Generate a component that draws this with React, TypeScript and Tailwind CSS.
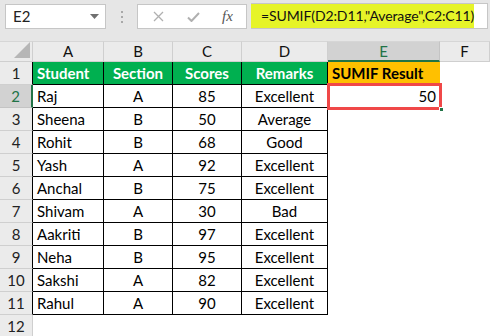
import React from "react";

const data: [string, string, string, string][] = [
  ["Raj", "A", "85", "Excellent"],
  ["Sheena", "B", "50", "Average"],
  ["Rohit", "B", "68", "Good"],
  ["Yash", "A", "92", "Excellent"],
  ["Anchal", "B", "75", "Excellent"],
  ["Shivam", "A", "30", "Bad"],
  ["Aakriti", "B", "97", "Excellent"],
  ["Neha", "B", "95", "Excellent"],
  ["Sakshi", "A", "82", "Excellent"],
  ["Rahul", "A", "90", "Excellent"],
];

const letters = ["A", "B", "C", "D", "E", "F"];

export default function App() {
  const rows: React.ReactNode[] = [];
  for (let r = 1; r <= 12; r++) {
    const sel = r === 2;
    const inTable = r <= 11;
    rows.push(
      <div
        key={`h${r}`}
        className={
          sel
            ? "h-[23px] flex items-center justify-center bg-[#d2d2d2] text-[#217346] border-b border-b-[#c4c4c4] border-r-2 border-r-[#217346]"
            : inTable
            ? "h-[23px] flex items-center justify-center bg-[#ebebeb] text-[#222] border-b border-b-[#cfcfcf] border-r border-r-black"
            : "h-[23px] flex items-center justify-center bg-[#ebebeb] text-[#222] border-b border-b-[#cfcfcf] border-r border-r-[#cfcfcf]"
        }
      >
        {r}
      </div>
    );
    if (r === 1) {
      ["Student", "Section", "Scores", "Remarks"].forEach((t, i) =>
        rows.push(
          <div
            key={`c1${i}`}
            className={
              i === 0
                ? "h-[23px] flex items-center pl-[4px] bg-[#00b050] text-white font-bold border-r border-b border-black"
                : "h-[23px] flex items-center justify-center bg-[#00b050] text-white font-bold border-r border-b border-black"
            }
          >
            {t}
          </div>
        )
      );
      rows.push(
        <div key="e1" className="h-[23px] flex items-center pl-[4px] bg-[#ffc000] text-black font-bold whitespace-nowrap">
          SUMIF Result
        </div>
      );
      rows.push(<div key="f1" className="h-[23px] bg-white" />);
    } else if (inTable) {
      const d = data[r - 2];
      rows.push(
        <div key={`a${r}`} className="h-[23px] flex items-center pl-[4px] bg-white text-black border-r border-b border-black">
          {d[0]}
        </div>
      );
      for (let i = 1; i < 4; i++) {
        rows.push(
          <div key={`c${r}${i}`} className="h-[23px] flex items-center justify-center bg-white text-black border-r border-b border-black">
            {d[i]}
          </div>
        );
      }
      rows.push(
        <div key={`e${r}`} className="h-[23px] flex items-center justify-end pr-[4px] bg-white text-black">
          {r === 2 ? "50" : ""}
        </div>
      );
      rows.push(<div key={`f${r}`} className="h-[23px] bg-white" />);
    } else {
      for (let i = 0; i < 6; i++) rows.push(<div key={`x${r}${i}`} className="h-[23px] bg-white" />);
    }
  }

  return (
    <div className="relative w-[490px] h-[336px] overflow-hidden bg-[#e6e6e6] font-['Lato','Liberation_Sans',sans-serif] text-[15px] leading-none">
      {/* formula bar */}
      <div className="h-[41px] flex items-start pt-[4px] pl-[5px]">
        <div className="w-[101px] h-[25px] bg-white border border-[#c6c6c6] flex items-center justify-between pl-[7px] pr-[6px] text-[#222]">
          <span>E2</span>
          <svg width="9" height="5" viewBox="0 0 9 5">
            <path d="M0 0 L9 0 L4.5 5 Z" fill="#707070" />
          </svg>
        </div>
        <div className="w-[31px] h-[25px] flex flex-col items-center justify-center gap-[3px]">
          <div className="w-[2px] h-[2px] bg-[#a8a8a8]" />
          <div className="w-[2px] h-[2px] bg-[#a8a8a8]" />
          <div className="w-[2px] h-[2px] bg-[#a8a8a8]" />
        </div>
        <div className="w-[110px] h-[25px] bg-white border border-[#c6c6c6] flex items-center">
          <svg className="ml-[15px]" width="11" height="11" viewBox="0 0 11 11">
            <path d="M1 1 L10 10 M10 1 L1 10" stroke="#b0b0b0" strokeWidth="1.3" fill="none" />
          </svg>
          <svg className="ml-[23px]" width="13" height="10" viewBox="0 0 13 10">
            <path d="M1 5.5 L4.5 9 L12 1" stroke="#b0b0b0" strokeWidth="2" fill="none" />
          </svg>
          <span className="ml-[22px] font-['Liberation_Serif',serif] italic text-[15px] text-[#555]">
            fx
          </span>
        </div>
        <div className="w-[4px]" />
        <div className="w-[237px] h-[26px] -mt-[1px] bg-white border border-[#c6c6c6] border-l-0 flex">
          <div className="w-[223px] h-full bg-[#e6f428] flex items-center pl-[10px] text-[#111] text-[14px] tracking-[-0.1px] whitespace-nowrap">
            =SUMIF(D2:D11,"Average",C2:C11)
          </div>
        </div>
      </div>

      {/* sheet */}
      <div className="grid grid-cols-[33px_71px_69px_69px_86px_112px_50px]">
        <div className="h-[21px] bg-[#ebebeb] border-r border-b border-[#cfcfcf] border-t border-t-[#d6d6d6] flex items-end justify-end pr-[2px] pb-[3px]">
          <svg width="16" height="16" viewBox="0 0 16 16">
            <path d="M16 0 L16 16 L0 16 Z" fill="#b6b6b6" />
          </svg>
        </div>
        {letters.map((l) =>
          l === "E" ? (
            <div
              key={l}
              className="h-[21px] flex items-center justify-center bg-[#d2d2d2] text-[#217346] border-r border-r-[#c4c4c4] border-t border-t-[#d6d6d6] border-b-2 border-b-[#217346]"
            >
              {l}
            </div>
          ) : (
            <div
              key={l}
              className="h-[21px] flex items-center justify-center bg-[#ebebeb] text-[#111] border-r border-b border-[#cfcfcf] border-t border-t-[#d6d6d6]"
            >
              {l}
            </div>
          )
        )}
        {rows}
      </div>

      {/* selection overlay */}
      <div className="absolute left-[327px] top-[83px] w-[115px] h-[27px] border-[3px] border-[#f04848]" />
      <div className="absolute left-[439px] top-[107px] w-[5px] h-[5px] bg-[#217346] border border-white" />
    </div>
  );
}
